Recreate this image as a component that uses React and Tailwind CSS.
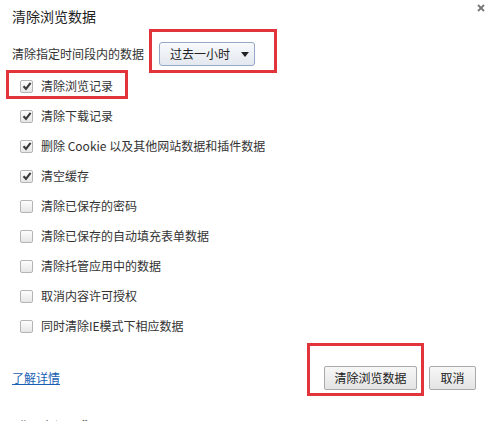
import React from "react";

const items = [
  { label: "清除浏览记录", checked: true },
  { label: "清除下载记录", checked: true },
  { label: "删除 Cookie 以及其他网站数据和插件数据", checked: true },
  { label: "清空缓存", checked: true },
  { label: "清除已保存的密码", checked: false },
  { label: "清除已保存的自动填充表单数据", checked: false },
  { label: "清除托管应用中的数据", checked: false },
  { label: "取消内容许可授权", checked: false },
  { label: "同时清除IE模式下相应数据", checked: false },
];

const Checkbox = ({ checked }) => (
  <span className="flex h-[13px] w-[13px] items-center justify-center rounded-[2px] border border-[#b4b4b4] bg-gradient-to-b from-[#fdfdfd] to-[#e6e6e6]">
    {checked && (
      <svg width="10" height="10" viewBox="0 0 10 10">
        <path d="M1.5 5.2 L4 7.8 L8.6 1.8" fill="none" stroke="#3a3a3a" strokeWidth="2.1" />
      </svg>
    )}
  </span>
);

const App = () => {
  return (
    <div
      className="relative h-[421px] w-[494px] overflow-hidden bg-white px-3 text-[12px] text-[#333]"
      style={{ fontFamily: '"Noto Sans CJK SC", "Liberation Sans", sans-serif' }}
    >
      {/* title */}
      <div className="pt-[7px] text-[14px] leading-[18px] text-[#222]">清除浏览数据</div>
      <svg className="absolute right-[9px] top-[4px]" width="8" height="8" viewBox="0 0 8 8">
        <path d="M1 1 L7 7 M7 1 L1 7" stroke="#777" strokeWidth="1.8" />
      </svg>

      {/* time range */}
      <div className="mt-[17px] flex h-[24px] items-center gap-[15px]">
        <span>清除指定时间段内的数据</span>
        <button className="flex h-[24px] w-[96px] items-center justify-between rounded-[3px] border border-[#93a9c6] bg-gradient-to-b from-[#f8fafc] to-[#e3e8ef] pl-[10px] pr-[5px] text-[12px] text-[#222]">
          <span>过去一小时</span>
          <svg width="8" height="5" viewBox="0 0 8 5">
            <path d="M0 0 L8 0 L4 5 Z" fill="#222" />
          </svg>
        </button>
      </div>

      {/* options */}
      <div className="mt-[5px] flex flex-col pl-2">
        {items.map((item) => (
          <label key={item.label} className="flex h-[30px] items-center gap-[8px]">
            <Checkbox checked={item.checked} />
            <span>{item.label}</span>
          </label>
        ))}
      </div>

      {/* footer */}
      <div className="mt-[25px] flex h-[24px] items-center justify-between pr-[6px]">
        <a href="#" className="text-[12px] text-[#1a5fb4] underline">了解详情</a>
        <div className="flex gap-[12px]">
          <button className="h-[24px] w-[93px] rounded-[2px] border border-[#aaa] bg-gradient-to-b from-[#f7f7f7] to-[#e4e4e4] text-[12px] text-[#222]">
            清除浏览数据
          </button>
          <button className="h-[24px] w-[47px] rounded-[2px] border border-[#aaa] bg-gradient-to-b from-[#f7f7f7] to-[#e4e4e4] text-[12px] text-[#222]">
            取消
          </button>
        </div>
      </div>

      <div className="mt-[26px] text-[14px] text-[#222]">“图中记录”</div>

      {/* annotation boxes */}
      <div className="absolute left-[149px] top-[29px] h-[44px] w-[128px] border-[3px] border-[#e2343b]" />
      <div className="absolute left-[6px] top-[70px] h-[29px] w-[122px] border-[3px] border-[#e2343b]" />
      <div className="absolute left-[307px] top-[343px] h-[53px] w-[117px] border-[3px] border-[#e2343b]" />
    </div>
  );
};

export default App;
